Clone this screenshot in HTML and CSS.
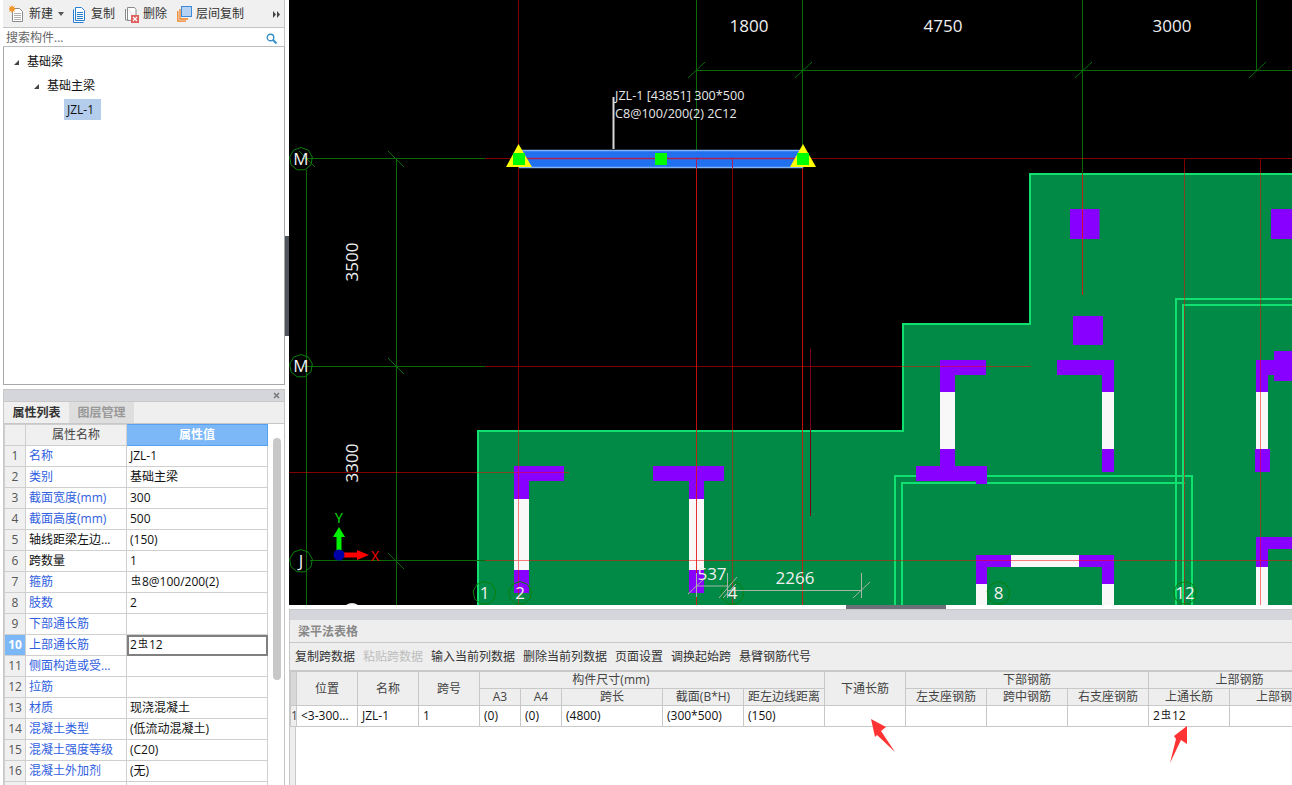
FILE: index.html
```html
<!DOCTYPE html>
<html lang="zh-CN">
<head>
<meta charset="utf-8">
<title>梁平法表格</title>
<link rel="stylesheet" href="styles.css">
</head>
<body>
<div class="app">
  <aside class="sidebar">
    <div class="toolbar">
      <svg class="ico ico-new" width="16" height="18" viewBox="0 0 16 18"><path class="doc-gray" d="M3.5 3.5h7l3 3v10h-10z"/><path class="doc-lines" d="M5 8.5h7M5 10.5h7M5 12.5h7M5 14.5h7"/><path class="spark" d="M3 0l1 2 2-1-1 2 2 1-2 1 1 2-2-1-1 2-1-2-2 1 1-2-2-1 2-1-1-2 2 1z"/></svg>
      <span class="tb-text">新建</span>
      <svg class="caret" width="8" height="4" viewBox="0 0 8 4"><path d="M1 0h6L4 4z"/></svg>
      <svg class="ico ico-copy" width="15" height="17" viewBox="0 0 15 17"><path class="doc-blue" d="M1.5 3.5v13h10M3.5 1.5h6l3 3v10h-9z"/><path class="doc-blue-lines" d="M5 6.5h6M5 8.5h6M5 10.5h6M5 12.5h6"/></svg>
      <span class="tb-text">复制</span>
      <svg class="ico ico-del" width="16" height="17" viewBox="0 0 16 17"><path class="doc-gray" d="M1.5 3v11h3M3.5 1.5h7l1.500 2v6M3.500 1.500v13h5"/><rect class="del-box" x="7" y="9" width="8" height="8"/><path class="del-x" d="M9 11l4 4M13 11l-4 4"/></svg>
      <span class="tb-text">删除</span>
      <svg class="ico ico-floor" width="15" height="16" viewBox="0 0 15 16"><path class="floor-o" d="M.8 5v10.200H9M3 3v10h8"/><rect class="floor-b" x="4.500" y=".5" width="10" height="10"/></svg>
      <span class="tb-text">层间复制</span>
      <svg class="more" width="7" height="7" viewBox="0 0 7 7"><path d="M0 0l3 3.500L0 7zM4 0l3 3.500L4 7z"/></svg>
    </div>
    <div class="search">
      <span class="search-text">搜索构件...</span>
      <svg width="11" height="11" viewBox="0 0 11 11"><circle class="lens" cx="4.500" cy="4.500" r="3.300"/><path class="lens-h" d="M7 7l3.500 3.500"/></svg>
    </div>
    <div class="tree">
      <div class="tree-row"><svg class="twist" width="5" height="5" viewBox="0 0 5 5"><path d="M5 0v5H0z"/></svg><span>基础梁</span></div>
      <div class="tree-row lvl2"><svg class="twist" width="5" height="5" viewBox="0 0 5 5"><path d="M5 0v5H0z"/></svg><span>基础主梁</span></div>
      <div class="tree-row lvl3"><span class="tree-sel">JZL-1</span></div>
    </div>
    <div class="props">
      <div class="band band-side"><svg width="7" height="7" viewBox="0 0 7 7"><path class="close-x" d="M1 1l5 5M6 1L1 6"/></svg></div>
      <div class="tabs"><span class="tab tab-on">属性列表</span><span class="tab">图层管理</span></div>
      <div class="props-body">
        <table class="ptable">
          <colgroup><col class="c-n"><col class="c-name"><col class="c-val"></colgroup>
          <thead><tr><th></th><th>属性名称</th><th class="hot">属性值</th></tr></thead>
          <tbody>
            <tr><td class="n">1</td><td class="k">名称</td><td>JZL-1</td></tr>
            <tr><td class="n">2</td><td class="k">类别</td><td>基础主梁</td></tr>
            <tr><td class="n">3</td><td class="k">截面宽度(mm)</td><td>300</td></tr>
            <tr><td class="n">4</td><td class="k">截面高度(mm)</td><td>500</td></tr>
            <tr><td class="n">5</td><td>轴线距梁左边...</td><td>(150)</td></tr>
            <tr><td class="n">6</td><td>跨数量</td><td>1</td></tr>
            <tr><td class="n">7</td><td class="k">箍筋</td><td><span class="rebar">虫</span>8@100/200(2)</td></tr>
            <tr><td class="n">8</td><td class="k">肢数</td><td>2</td></tr>
            <tr><td class="n">9</td><td class="k">下部通长筋</td><td></td></tr>
            <tr><td class="n hot">10</td><td class="k">上部通长筋</td><td class="editing">2<span class="rebar">虫</span>12</td></tr>
            <tr><td class="n">11</td><td class="k">侧面构造或受...</td><td></td></tr>
            <tr><td class="n">12</td><td class="k">拉筋</td><td></td></tr>
            <tr><td class="n">13</td><td class="k">材质</td><td>现浇混凝土</td></tr>
            <tr><td class="n">14</td><td class="k">混凝土类型</td><td>(低流动混凝土)</td></tr>
            <tr><td class="n">15</td><td class="k">混凝土强度等级</td><td>(C20)</td></tr>
            <tr><td class="n">16</td><td class="k">混凝土外加剂</td><td>(无)</td></tr>
            <tr><td class="n"></td><td></td><td></td></tr>
          </tbody>
        </table>
        <div class="vscroll"><div class="vthumb"></div></div>
      </div>
    </div>
  </aside>
  <div class="splitter"><div class="split-handle"></div></div>
  <main class="main">
    <svg class="cad" width="1003" height="605" viewBox="289 0 1003 605">
      <defs>
        <polygon id="bub" points="0,-11.500 7.400,-8.800 11.300,-2 10,5.750 3.900,10.800 -3.900,10.800 -10,5.750 -11.300,-2 -7.400,-8.800"/>
      </defs>
      <rect class="c-black" x="289" y="0" width="1003" height="605"/>

      <path class="slab" d="M1030 174H1292V605H477V431H903V324H1030Z"/>
      <path class="slab-edge" d="M1292 174H1030V324H903V431H478V605"/>
      <path class="slab-edge" d="M895 605V476H1192V605M902 605V483H1185"/>
      <path class="slab-edge" d="M1176 605V299H1292M1183 605V305H1292"/>

      <g class="purple">
        <rect x="1070" y="209" width="29.500" height="30"/>
        <rect x="1271" y="209" width="21" height="30"/>
        <rect x="1073" y="316" width="30" height="29"/>
        <path d="M940 360H986V375H955V392H940Z"/>
        <path d="M940 449H955V466H987V484H976V481H916V466H940Z"/>
        <path d="M1057 360H1114V392H1102V375H1057Z"/>
        <rect x="1102" y="449" width="12" height="23"/>
        <path d="M1256 360H1274V351H1292V381H1274V375H1268V392H1256Z"/>
        <rect x="1255" y="449" width="15" height="23"/>
        <path d="M514 466H564V481H529V499H514Z"/>
        <rect x="514" y="570" width="15" height="23"/>
        <path d="M653 466H724V481H704V499H689V481H653Z"/>
        <rect x="689" y="570" width="15" height="23"/>
        <path d="M976 555H1011V567H987V584H976Z"/>
        <path d="M1079 555H1114V584H1102V567H1079Z"/>
        <path d="M1256 537H1292V549H1268V567H1256Z"/>
      </g>
      <g class="wall">
        <rect x="940" y="392" width="15" height="57"/>
        <rect x="1102" y="392" width="12" height="57"/>
        <rect x="1256" y="392" width="12" height="57"/>
        <rect x="514" y="499" width="15" height="71"/>
        <rect x="689" y="499" width="15" height="71"/>
        <rect x="1011" y="555" width="68" height="12"/>
        <rect x="976" y="584" width="11" height="21"/>
        <rect x="1102" y="584" width="12" height="21"/>
        <rect x="1256" y="567" width="12" height="38"/>
      </g>

      <g class="grid-green">
        <path d="M302 158.500H485M302 366.500H485M310 560.500H485"/>
        <path d="M306.500 170V605M396.500 159V605"/>
        <path d="M696.500 0V150M802.500 0V150M1082.500 0V174M1256.500 0V70M696 70.500H1292"/>
      </g>
      <g class="ticks">
        <path d="M388 151L404 167M388 358L404 374M388 553L404 569M299 151L315 167"/>
        <path d="M688 78L705 62M795 78L812 62M1075 78L1092 62M1249 78L1266 62"/>
      </g>

      <path class="red-a" d="M518.500 0V605M485 158.500H519M803 158.500H1292M485 366.500H1031M289 472.500H569M485 560.500H1292M732.500 159V605M1184.500 159V605M1260.500 159V605"/>
      <path class="red-b" d="M696.500 159V605M802.500 159V605M1082.500 174V295"/>
      <path class="red-c" d="M810.500 349V516"/>

      <rect class="beam" x="519.500" y="150.500" width="283" height="17"/>
      <path class="beam-mid" d="M519 158.500H803"/>
      <path class="beam-stub" d="M696.500 159V168M732.500 159V168"/>
      <path class="lead" d="M613.500 97V149"/>
      <polygon class="tri" points="518.500,144 506,167 532,167"/>
      <polygon class="tri" points="803,144 790,167 816,167"/>
      <rect class="grip" x="513" y="153" width="12" height="12"/>
      <rect class="grip" x="655" y="153" width="12" height="12"/>
      <rect class="grip" x="797" y="153" width="12" height="12"/>
      <text class="label" x="615" y="100">JZL-1 [43851] 300*500</text>
      <text class="label" x="615" y="118">C8@100/200(2) 2C12</text>

      <g class="bubbles">
        <use href="#bub" x="301" y="159"/><use href="#bub" x="301" y="366"/><use href="#bub" x="301" y="561"/>
        <use href="#bub" x="484.500" y="593"/><use href="#bub" x="520" y="593"/><use href="#bub" x="732.500" y="593"/>
        <use href="#bub" x="998.500" y="593"/><use href="#bub" x="1185" y="593"/>
      </g>

      <g class="dim-lines">
        <path d="M697 586H728M696.500 573V597M688 594L705 578M727.500 573V598M719 598L737 577M723 598L736 584M728 590.500H862M861.500 573V598M853 598L870 582"/>
      </g>

      <g class="cad-text">
        <text x="749" y="32">1800</text>
        <text x="943" y="32">4750</text>
        <text x="1172" y="32">3000</text>
        <text transform="rotate(-90 358 262)" x="358" y="262">3500</text>
        <text transform="rotate(-90 358 463)" x="358" y="463">3300</text>
        <text x="301" y="165">M</text>
        <text x="301" y="372">M</text>
        <text x="301" y="567">J</text>
        <text x="484.500" y="599">1</text>
        <text x="520" y="599">2</text>
        <text x="732.500" y="599">4</text>
        <text x="998.500" y="599">8</text>
        <text x="1185" y="599">12</text>
        <text x="712" y="580">537</text>
        <text x="795" y="584">2266</text>
      </g>
      <path class="blob" d="M346 605q6-4 12 0z"/>

      <path class="ax-y" d="M339 527L345 537H341.500V555H336.500V537H333Z"/>
      <path class="ax-x" d="M339 552.500H357V550L369 555L357 560V557.500H339Z"/>
      <circle class="ax-o" cx="339" cy="555" r="5.500"/>
      <text class="ax-t-y" x="339" y="523">Y</text>
      <text class="ax-t-x" x="375" y="561">X</text>
    </svg>
    <div class="h-split"><div class="h-handle"></div></div>
    <section class="bottom">
      <div class="band"></div>
      <div class="title">梁平法表格</div>
      <div class="actions">
        <span>复制跨数据</span><span class="off">粘贴跨数据</span><span>输入当前列数据</span><span>删除当前列数据</span><span>页面设置</span><span>调换起始跨</span><span>悬臂钢筋代号</span>
      </div>
      <div class="grid-wrap">
        <table class="gtable">
          <colgroup>
            <col class="g0"><col class="g61"><col class="g61"><col class="g61"><col class="g41"><col class="g41"><col class="g101"><col class="g81"><col class="g81"><col class="g81"><col class="g81"><col class="g81"><col class="g81"><col class="g81"><col class="g101">
          </colgroup>
          <thead>
            <tr>
              <th rowspan="2" class="corner"></th><th rowspan="2">位置</th><th rowspan="2">名称</th><th rowspan="2">跨号</th>
              <th colspan="5" class="th-size">构件尺寸(mm)</th><th rowspan="2">下通长筋</th>
              <th colspan="3">下部钢筋</th><th colspan="2">上部钢筋</th>
            </tr>
            <tr>
              <th>A3</th><th>A4</th><th>跨长</th><th>截面(B*H)</th><th class="tight">距左边线距离</th>
              <th>左支座钢筋</th><th>跨中钢筋</th><th>右支座钢筋</th><th>上通长筋</th><th>上部钢筋</th>
            </tr>
          </thead>
          <tbody>
            <tr>
              <td class="gn">1</td><td>&lt;3-300...</td><td>JZL-1</td><td>1</td><td>(0)</td><td>(0)</td><td>(4800)</td><td>(300*500)</td><td>(150)</td><td></td><td></td><td></td><td></td><td>2<span class="rebar">虫</span>12</td><td></td>
            </tr>
          </tbody>
        </table>
        <div class="gutter"></div>
      </div>
      <svg class="arrow arrow-a" width="26" height="35" viewBox="870 718 26 35"><polygon points="871,719 886,727 881,731 895,752 877,735 875,737"/></svg>
      <svg class="arrow arrow-b" width="19" height="39" viewBox="1169 725 19 39"><polygon points="1187,726 1187,744 1181,740 1170,763 1176,739 1174,736"/></svg>
    </section>
  </main>
</div>
</body>
</html>
```

FILE: styles.css
```css
* { box-sizing: border-box; }
html, body { margin: 0; padding: 0; height: 785px; overflow: hidden; background: #fff; }
body, table { font: 12px/16px "Open Sans", "Noto Sans CJK SC", sans-serif; color: #111; }

.app { display: flex; width: 1292px; height: 785px; overflow: hidden; }

/* ---------- left column ---------- */
.sidebar { width: 285px; height: 785px; padding-left: 3px; display: flex; flex-direction: column; flex: none; }
.toolbar { height: 28px; flex: none; display: flex; align-items: center; padding: 1px 0 0 6px; background: #f0f0f0; border-bottom: 1px solid #c4c4c4; border-right: 1px solid #c4c4c4; color: #333; }
.ico { flex: none; display: block; }
.tb-text { margin-left: 4px; }
.caret { margin: 0 7px 0 4px; fill: #555; flex: none; }
.ico-copy + .tb-text { margin-left: 4px; }
.ico-del { margin-left: 9px; margin-right: -1px; }
.ico-floor { margin-left: 10px; }
.more { margin-left: auto; margin-right: 4px; fill: #444; }
.doc-gray { fill: #fff; stroke: #8a8a8a; }
.doc-lines { stroke: #b0b0b0; fill: none; }
.spark { fill: #f0962a; }
.doc-blue { fill: #fff; stroke: #2a7fd0; }
.doc-blue-lines { stroke: #2a7fd0; fill: none; }
.del-box { fill: #e06060; }
.del-x { stroke: #fff; stroke-width: 1.2; fill: none; }
.floor-o { fill: none; stroke: #f08020; stroke-width: 1.3; }
.floor-b { fill: #b4d2f4; stroke: #3c8ad8; }

.search { height: 19px; flex: none; display: flex; align-items: center; justify-content: space-between; padding: 2px 7px 0 3px; background: #fff; border-right: 1px solid #c4c4c4; border-bottom: 1px solid #bdbdbd; color: #666; }
.lens { fill: none; stroke: #3a8fc8; stroke-width: 1.4; }
.lens-h { stroke: #3a8fc8; stroke-width: 2; fill: none; }

.tree { height: 338px; flex: none; border: 1px solid #a8a8a8; border-top: 0; padding-top: 3px; }
.tree-row { height: 24px; display: flex; align-items: center; padding-left: 10px; }
.twist { fill: #444; margin-right: 8px; flex: none; }
.lvl2 { padding-left: 30px; }
.lvl3 { padding-left: 60px; height: 21px; margin-top: 1px; }
.tree-sel { display: block; background: #b4cdec; height: 21px; line-height: 21px; padding: 0 3px; width: 37px; }

.props { margin-top: 4px; flex: 1; min-height: 0; display: flex; flex-direction: column; overflow: hidden; border-right: 1px solid #c4c4c4; border-left: 1px solid #c8c8c8; }
.band { height: 11px; flex: none; background: #d4d6dc; border-top: 1px solid #c8c8c8; }
.band-side { height: 12px; display: flex; align-items: center; justify-content: flex-end; padding-right: 4px; }
.close-x { stroke: #777; stroke-width: 1.5; fill: none; }
.tabs { height: 23px; flex: none; display: flex; background: #efefef; border-top: 1px solid #c8c8c8; border-bottom: 1px solid #c8c8c8; font-weight: 700; }
.tab { width: 65px; text-align: center; line-height: 22px; color: #999; background: #dedede; }
.tab-on { color: #333; background: #efefef; }

.props-body { flex: 1; min-height: 0; display: flex; }
.ptable { width: 263px; table-layout: fixed; border-collapse: collapse; flex: none; }
.c-n { width: 21px; }
.c-name { width: 101px; }
.c-val { width: 141px; }
.ptable tr { height: 21px; }
.ptable th, .ptable td { border: 1px solid #cfcfcf; padding: 0 3px; white-space: nowrap; overflow: hidden; height: 21px; }
.ptable th { background: #f0f0f0; font-weight: 400; color: #444; text-align: center; }
.ptable th.hot { background: #7cb8f8; color: #fff; font-weight: 700; border-color: #58a0f0; }
.ptable .n { background: #f0f0f0; color: #555; text-align: center; padding: 0; }
.ptable .n.hot { background: #7cb8f8; color: #fff; font-weight: 700; }
.ptable .k { color: #3060e0; }
.ptable .editing { outline: 2px solid #808080; outline-offset: -2px; }
.rebar { display: inline-block; width: 12px; font-size: 10px; line-height: 10px; text-align: center; vertical-align: 2px; }
.vscroll { flex: 1; background: #fff; padding: 14px 4px 0 5px; }
.vthumb { width: 8px; height: 242px; background: #c8c8c8; border-radius: 4px; }

.splitter { width: 4px; flex: none; background: #fff; padding-top: 236px; }
.split-handle { width: 4px; height: 100px; background: #50555c; }

/* ---------- main column ---------- */
.main { width: 1003px; flex: none; height: 785px; display: flex; flex-direction: column; overflow: hidden; }
.cad { display: block; flex: none; }
.c-black { fill: #000; }
.slab { fill: #008a46; }
.slab-edge { fill: none; stroke: #10e070; stroke-width: 2; }
.purple { fill: #8800ff; }
.wall { fill: #f8f8f8; }
.grid-green path { fill: none; stroke: #0a6a0a; stroke-width: 1; shape-rendering: crispEdges; }
.ticks path { fill: none; stroke: #0a6c0a; stroke-width: 1; }
.red-a { fill: none; stroke: #ff0000; stroke-opacity: .5; stroke-width: 1; shape-rendering: crispEdges; }
.red-b { fill: none; stroke: #e01010; stroke-opacity: .85; stroke-width: 1; shape-rendering: crispEdges; }
.red-c { fill: none; stroke: #7a0020; stroke-width: 1; shape-rendering: crispEdges; }
.beam { fill: #2070f0; stroke: #80b4f8; stroke-width: 1.500; }
.beam-mid { stroke: #b02050; stroke-width: 1.500; fill: none; }
.beam-stub { stroke: #b02050; stroke-width: 1; fill: none; }
.lead { stroke: #d8d8d8; stroke-width: 2; fill: none; }
.tri { fill: #ffff00; }
.grip { fill: #00ff00; }
.label { font: 12.600px "Open Sans", sans-serif; fill: #e8e8e8; }
.bubbles use { fill: none; stroke: #0a800a; stroke-width: 1; }
.dim-lines path { fill: none; stroke: #a8b4a8; stroke-width: 1; }
.cad-text text { font: 17px "Open Sans", sans-serif; fill: #f0f0f0; text-anchor: middle; }
.blob { fill: #f0f0f0; }
.ax-y { fill: #00f000; }
.ax-x { fill: #ff0000; }
.ax-o { fill: #0000a8; }
.ax-t-y { font: 14px "Open Sans", sans-serif; fill: #00e000; text-anchor: middle; }
.ax-t-x { font: 14px "Open Sans", sans-serif; fill: #ff0000; text-anchor: middle; }

.h-split { height: 4px; flex: none; background: #fff; padding-left: 557px; }
.h-handle { width: 100px; height: 4px; background: #6c7078; }

.bottom { flex: 1; min-height: 0; position: relative; display: flex; flex-direction: column; background: #fff; border-left: 1px solid #c8c8c8; overflow: hidden; }
.title { height: 23px; flex: none; background: #eeeeee; border-bottom: 1px solid #c8c8c8; padding-left: 8px; line-height: 23px; color: #888; font-weight: 700; }
.actions { height: 28px; flex: none; background: #eeeeee; border-bottom: 1px solid #c8c8c8; display: flex; align-items: center; gap: 8px; padding-left: 5px; color: #333; }
.actions .off { color: #bdbdbd; }

.grid-wrap { flex: 1; min-height: 0; display: flex; flex-direction: column; overflow: hidden; }
.gtable { width: 1040px; table-layout: fixed; border-collapse: collapse; flex: none; }
.g0 { width: 6px; }
.g61 { width: 61px; }
.g41 { width: 41px; }
.g101 { width: 101px; }
.g81 { width: 81px; }
.gtable th { background: #eeeeee; border: 1px solid #c8c8c8; font-weight: 400; color: #444; text-align: center; padding: 0; height: 17px; white-space: nowrap; overflow: hidden; }
.gtable tbody td { border: 1px solid #c8c8c8; height: 21px; padding: 0 4px; white-space: nowrap; overflow: hidden; }
.gtable .corner { background: #d8d8d8; }
.gtable .gn { background: #eeeeee; padding: 0; text-align: center; color: #444; }
.gtable .th-size { padding-right: 82px; }
.gutter { flex: 1; width: 6px; background: #eeeeee; border-right: 1px solid #c8c8c8; }

.arrow { position: absolute; fill: #ff3333; }
.arrow-a { left: 580px; top: 109px; }
.arrow-b { left: 879px; top: 116px; }
```
